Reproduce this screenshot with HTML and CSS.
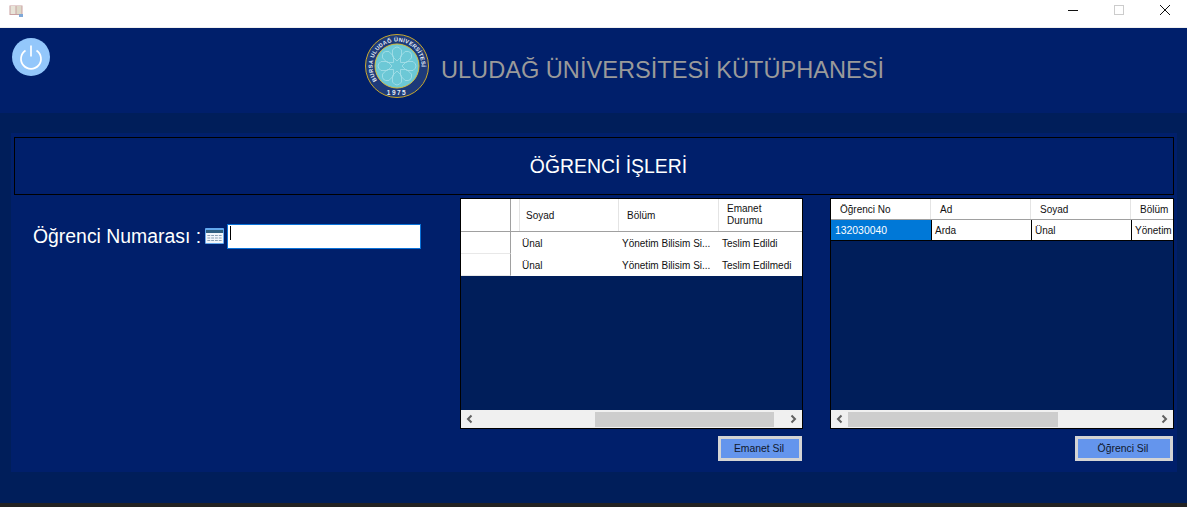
FILE: index.html
```html
<!DOCTYPE html>
<html lang="tr">
<head>
<meta charset="utf-8">
<title>Uludağ Üniversitesi Kütüphanesi</title>
<link rel="stylesheet" href="styles.css">
</head>
<body>
<div class="titlebar">
  <svg class="app-icon" width="14" height="12" viewBox="0 0 14 12"><rect x="0.5" y="0.5" width="13" height="9.5" fill="#c9a0a0"/><rect x="1.5" y="1" width="5" height="8" fill="#e8e4d8"/><rect x="7.5" y="1" width="5" height="8" fill="#ddd8c8"/><rect x="10" y="9" width="4" height="3" fill="#7fa8d8"/></svg>
  <div class="win-controls">
    <svg class="wc wc-min" width="10" height="10" viewBox="0 0 10 10"><path d="M0 5.500h10" stroke="#111" fill="none"/></svg>
    <svg class="wc wc-max" width="10" height="10" viewBox="0 0 10 10"><rect x=".5" y=".5" width="9" height="9" stroke="#ccc" fill="none"/></svg>
    <svg class="wc wc-close" width="10" height="10" viewBox="0 0 10 10"><path d="M0 0l10 10M10 0L0 10" stroke="#111" fill="none"/></svg>
  </div>
</div>
<header class="header">
  <div class="power">
    <svg width="26" height="26" viewBox="0 0 26 26"><path d="M7.500 6.500a10 10 0 1 0 11 0" stroke="#fff" stroke-width="1.700" fill="none"/><path d="M13 1.500v11" stroke="#fff" stroke-width="1.700"/></svg>
  </div>
  <div class="brand">
    <svg class="seal" width="64" height="64" viewBox="0 0 64 64">
      <defs>
        <path id="arc" d="M12 46.400A24.600 24.600 0 1 1 52 46.400"/>
        <path id="petal" d="M32 27L27.500 22.500V16Q32 10 36.500 16V22.500Z"/>
      </defs>
      <circle cx="32" cy="32" r="31.500" fill="#1d3a7a" stroke="#c9a82e" stroke-width="1"/>
      <circle cx="32" cy="32" r="22" fill="#6cc8d6" stroke="#d8c040" stroke-width="1"/>
      <g stroke="#a8e0e8" stroke-width=".8" fill="none">
        <use href="#petal"/>
        <use href="#petal" transform="rotate(45 32 32)"/>
        <use href="#petal" transform="rotate(90 32 32)"/>
        <use href="#petal" transform="rotate(135 32 32)"/>
        <use href="#petal" transform="rotate(180 32 32)"/>
        <use href="#petal" transform="rotate(225 32 32)"/>
        <use href="#petal" transform="rotate(270 32 32)"/>
        <use href="#petal" transform="rotate(315 32 32)"/>
      </g>
      <text class="seal-text"><textPath href="#arc">BURSA ULUDAĞ ÜNİVERSİTESİ</textPath></text>
      <text class="seal-year" x="32" y="60.500" text-anchor="middle">1975</text>
    </svg>
    <h1 class="brand-name">ULUDAĞ ÜNİVERSİTESİ KÜTÜPHANESİ</h1>
  </div>
</header>
<div class="band"></div>
<div class="shell">
  <main class="panel">
    <div class="page-title">ÖĞRENCİ İŞLERİ</div>
    <div class="content">
      <section class="search">
        <label class="search-label" for="no">Öğrenci Numarası :</label>
        <svg class="calc" width="19" height="16" viewBox="0 0 20 16" preserveAspectRatio="none"><rect width="20" height="16" rx="1" fill="#62a8ee"/><rect x="1" y="2" width="18" height="3" fill="#2f5f80"/><rect x="1" y="5" width="18" height="10" fill="#f2f6fa"/><path d="M2.500 7.500h15M2.500 10h15M2.500 12.500h15" stroke="#8aa0b4" stroke-width="1.200" stroke-dasharray="3 1"/></svg>
        <div class="input" id="no"><span class="caret"></span></div>
      </section>
      <section class="col col-left">
        <div class="grid">
          <div class="gt gt-left">
            <div class="gh">
              <div class="rowhead"></div>
              <div class="gh-c w-soyad-l"><span>Soyad</span></div>
              <div class="gh-c w-100"><span>Bölüm</span></div>
              <div class="gh-c w-84"><span class="wrap">Emanet Durumu</span></div>
            </div>
            <div class="gr"><div class="rowhead"></div><div class="c c-l1">Ünal</div><div class="c w-100">Yönetim Bilisim Si...</div><div class="c w-84">Teslim Edildi</div></div>
            <div class="gr"><div class="rowhead"></div><div class="c c-l1">Ünal</div><div class="c w-100">Yönetim Bilisim Si...</div><div class="c w-84">Teslim Edilmedi</div></div>
          </div>
          <div class="sb">
            <svg class="sb-arrow" width="17" height="16" viewBox="0 0 17 16"><path d="M10.500 4.500L7 8l3.500 3.500" stroke="#606060" stroke-width="2" fill="none"/></svg>
            <div class="sb-track sb-track-left"><div class="thumb"></div></div>
            <svg class="sb-arrow" width="17" height="16" viewBox="0 0 17 16"><path d="M6.500 4.500L10 8l-3.500 3.500" stroke="#606060" stroke-width="2" fill="none"/></svg>
          </div>
        </div>
        <div class="actions"><button class="btn btn-l">Emanet Sil</button></div>
      </section>
      <section class="col col-right">
        <div class="grid">
          <div class="gt gt-right">
            <div class="gh gh-r">
              <div class="gh-c w-100"><span>Öğrenci No</span></div>
              <div class="gh-c w-100"><span>Ad</span></div>
              <div class="gh-c w-100"><span>Soyad</span></div>
              <div class="gh-c w-rest"><span>Bölüm</span></div>
            </div>
            <div class="gr gr-r">
              <div class="c w-100 sel">132030040</div>
              <div class="c w-100 bd">Arda</div>
              <div class="c w-100 bd">Ünal</div>
              <div class="c w-rest">Yönetim</div>
            </div>
          </div>
          <div class="sb">
            <svg class="sb-arrow" width="17" height="16" viewBox="0 0 17 16"><path d="M10.500 4.500L7 8l3.500 3.500" stroke="#606060" stroke-width="2" fill="none"/></svg>
            <div class="sb-track sb-track-right"><div class="thumb"></div></div>
            <svg class="sb-arrow" width="17" height="16" viewBox="0 0 17 16"><path d="M6.500 4.500L10 8l-3.500 3.500" stroke="#606060" stroke-width="2" fill="none"/></svg>
          </div>
        </div>
        <div class="actions"><button class="btn btn-r">Öğrenci Sil</button></div>
      </section>
    </div>
  </main>
</div>
<div class="footer"></div>
</body>
</html>
```
FILE: styles.css
```css
* { box-sizing: border-box; }
html, body { margin: 0; height: 507px; overflow: hidden; }
body { background: #001e5a; font-family: "Liberation Sans", Arial, sans-serif; display: flex; flex-direction: column; }

.titlebar { height: 28px; background: #fff; border-bottom: 1px solid #f0f0f0; display: flex; align-items: flex-start; justify-content: space-between; padding: 5px 0 0 9px; flex: none; }
.win-controls { display: flex; align-items: center; height: 10px; }
.wc { display: block; }
.wc-min { margin-right: 36px; }
.wc-max { margin-right: 36px; }
.wc-close { margin-right: 17px; }

.header { height: 85px; flex: none; background: #001f6b; position: relative; display: flex; justify-content: center; }
.power { position: absolute; left: 12px; top: 10px; width: 38px; height: 38px; border-radius: 50%; background: #93c7fb; display: flex; align-items: center; justify-content: center; }
.power svg { display: block; }
.brand { display: flex; align-items: center; margin-left: 62px; height: 64px; margin-top: 6px; gap: 12px; }
.seal { display: block; flex: none; }
.seal-text { font-size: 5.600px; font-weight: 700; fill: #e8eef8; letter-spacing: .3px; }
.seal-year { font-size: 6.500px; font-weight: 700; fill: #e8eef8; letter-spacing: 1.500px; }
.brand-name { margin: 8px 0 0; font-size: 23.600px; font-weight: 400; color: #9a9a9a; white-space: nowrap; }

.band { height: 20px; flex: none; background: #001e5a; }
.shell { height: 339px; flex: none; padding: 0 10px 0 11px; }
.panel { height: 100%; background: #001f6b; padding: 4px 3px 0 3px; }
.page-title { height: 58px; border: 1px solid #000; color: #fff; font-size: 19.400px; display: flex; align-items: center; justify-content: center; padding-left: 29px; }

.content { display: flex; padding-top: 3px; }
.search { width: 446px; flex: none; display: flex; align-items: center; height: 30px; margin-top: 23px; padding-left: 19px; }
.search-label { color: #fff; font-size: 19.400px; white-space: nowrap; margin-right: 4px; }
.calc { flex: none; margin-right: 3px; }
.input { width: 194px; height: 25px; flex: none; background: #fff; border: 1px solid #0a72d8; padding: 1px 0 0 2px; }
.caret { display: block; width: 1px; height: 14px; background: #000; }

.col { flex: none; display: flex; flex-direction: column; }
.col-left { width: 343px; margin-right: 27px; }
.col-right { width: 344px; }
.grid { height: 231px; border: 1px solid #000; background: #001e5a; display: flex; flex-direction: column; justify-content: space-between; }
.gt { overflow: hidden; font-size: 10px; color: #111; }
.gh { display: flex; height: 33px; background: #fff; border-bottom: 1px solid #a0a0a0; }
.gh-r { height: 21px; }
.gr { display: flex; height: 22px; background: #fff; align-items: center; }
.gr-r { height: 21px; border-bottom: 1px solid #000; }
.rowhead { width: 50px; flex: none; align-self: stretch; border-right: 1px solid #a0a0a0; }
.gr .rowhead { border-bottom: 1px solid #e8e8e8; }
.gh-c { flex: none; display: flex; align-items: center; padding-left: 8px; border-right: 1px solid #e4e4e4; height: 100%; }
.gh-r .gh-c { padding-left: 9px; }
.w-soyad-l { width: 108px; padding-left: 7px; border-left: 8px solid #fff; box-shadow: inset 1px 0 0 #e4e4e4; }
.w-100 { width: 100px; flex: none; }
.w-84 { width: 84px; flex: none; border-right: 0; }
.w-rest { flex: 1 1 0; min-width: 0; border-right: 0; }
.wrap { display: block; width: 50px; line-height: 12px; }
.c { padding-left: 3px; white-space: nowrap; overflow: hidden; }
.c-l1 { width: 108px; flex: none; padding-left: 11px; }
.gr-r .c { align-self: stretch; display: flex; align-items: center; }
.sel { background: #0078d7; color: #fff; font-size: 10.400px; padding-left: 4px; }
.bd { border-left: 1px solid #000; }
.gr-r .w-rest { border-left: 1px solid #000; }

.sb { height: 18px; background: #f0f0f0; display: flex; align-items: center; flex: none; }
.sb-arrow { display: block; flex: none; }
.sb-track { flex: 1 1 0; height: 15px; }
.thumb { height: 100%; background: #cdcdcd; }
.sb-track-left { padding-left: 117px; padding-right: 11px; }
.sb-track-right { padding-right: 98px; }

.actions { display: flex; justify-content: flex-end; padding: 7px 1px 0 0; }
.btn { width: 84px; height: 25px; background: #6495ed; border: 3px solid #d4d4d4; font: 400 10.400px "Liberation Sans", Arial, sans-serif; color: #10182c; padding: 0 2px 0 0; }
.btn-r { width: 98px; }

.footer { flex: none; height: 31px; background: #001e5a; }
body::after { content: ""; display: block; flex: none; height: 4px; background: #222; }
```
